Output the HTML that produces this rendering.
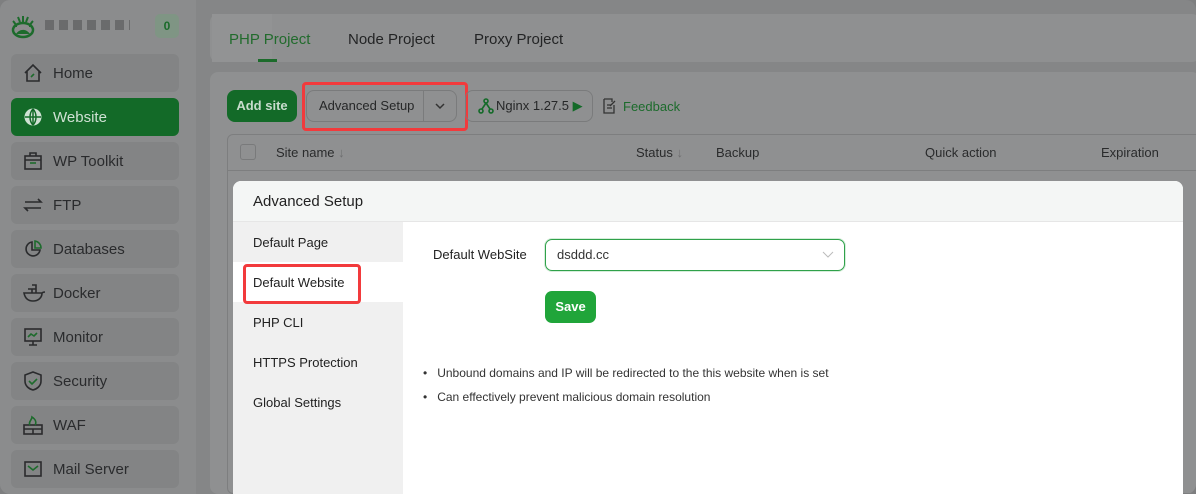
<!DOCTYPE html>
<html><head><style>
*{box-sizing:border-box;margin:0;padding:0}
html,body{width:1196px;height:494px;overflow:hidden}
body{background:#7e7f80;font-family:"Liberation Sans",sans-serif;position:relative}
.win{position:absolute;left:0;top:0;width:1196px;height:494px;border-radius:10px;background:#858687;overflow:hidden}
.side{position:absolute;left:0;top:0;width:196px;height:494px;background:#8b8c8d}
.nav{position:absolute;left:11px;width:168px;height:38px;border-radius:6px;background:#838485;color:#2a2b2d;font-size:15px;line-height:40px;padding-left:42px}
.nav svg{position:absolute;left:12px;top:9px}
.nav.act{background:#136a28;color:#cfe1d3}
.card{position:absolute;background:#8f9091;border-radius:8px}
.tab{position:absolute;top:31px;font-size:15px;color:#232425}
.btn{position:absolute;top:90px;height:32px;border:1px solid #7a7b7c;border-radius:8px;font-size:13px;line-height:30px;color:#262728}
.th{position:absolute;top:145px;font-size:13px;color:#2a2b2c}
.modal{position:absolute;left:233px;top:181px;width:950px;height:313px;background:#fff;border-radius:8px 8px 0 0;overflow:hidden}
.mh{height:41px;background:#f4f6f5;border-bottom:1px solid #e6e6e6;font-size:15px;color:#222;line-height:42px;padding-left:20px}
.ml{position:absolute;left:0;top:41px;width:170px;height:272px;background:#f0f0f0}
.mi{height:40px;line-height:42px;font-size:13px;color:#222;padding-left:20px}
.red{position:absolute;border:3px solid #f23a3c;border-radius:4px}
</style></head><body>
<div class="win">
<div class="side">
 <svg style="position:absolute;left:10px;top:13px" width="26" height="26" viewBox="0 0 26 26"><path d="M3 8c2 2 3 4 3 6M23 8c-2 2-3 4-3 6M8 4l2 5M18 4l-2 5M13 3v6" stroke="#1d6b2c" stroke-width="2" fill="none"/><ellipse cx="13" cy="17" rx="10" ry="7" fill="none" stroke="#1d6b2c" stroke-width="2.5"/><path d="M6 21c3-5 10-6 14 0z" fill="#1d6b2c"/></svg>
 <div style="position:absolute;left:45px;top:20px;width:85px;height:10px;background:repeating-linear-gradient(90deg,#6a6b6c 0 9px,#8c8d8e 9px 14px)"></div>
 <div style="position:absolute;left:155px;top:14px;width:24px;height:24px;border-radius:5px;background:#7f9584;color:#1a6b2a;font-size:12px;font-weight:bold;text-align:center;line-height:24px">0</div>
 <div class="nav" style="top:54px"><svg width="20" height="20" viewBox="0 0 20 20" fill="none" stroke="#2a2b2d" stroke-width="1.6"><path d="M2 10L10 2l8 8M4 8v10h12V8"/><path d="M8 14l3-3" stroke="#1d6b2c"/></svg>Home</div>
 <div class="nav act" style="top:98px"><svg width="20" height="20" viewBox="0 0 20 20"><circle cx="10" cy="10" r="8.5" fill="#cfe1d3"/><path d="M10 2v16M2 10h16M10 2c-4 4-4 12 0 16M10 2c4 4 4 12 0 16" stroke="#136a28" stroke-width="1.5" fill="none"/></svg>Website</div>
 <div class="nav" style="top:142px"><svg width="20" height="20" viewBox="0 0 20 20" fill="none" stroke="#2a2b2d" stroke-width="1.6"><rect x="2" y="5" width="16" height="13"/><path d="M7 5V2h6v3M2 9h16"/><path d="M7 12h6" stroke="#1d6b2c"/></svg>WP Toolkit</div>
 <div class="nav" style="top:186px"><svg width="20" height="20" viewBox="0 0 20 20" fill="none" stroke="#2a2b2d" stroke-width="1.6"><path d="M2 7h16l-3-3M18 13H2l3 3"/></svg>FTP</div>
 <div class="nav" style="top:230px"><svg width="20" height="20" viewBox="0 0 20 20" fill="none" stroke="#2a2b2d" stroke-width="1.6"><path d="M9 3a7 7 0 1 0 8 8H9z"/><path d="M12 2v7h6a7 7 0 0 0-6-7z" stroke="#1d6b2c"/></svg>Databases</div>
 <div class="nav" style="top:274px"><svg width="22" height="20" viewBox="0 0 22 20" fill="none" stroke="#2a2b2d" stroke-width="1.6"><path d="M1 10h18c0 5-4 8-9 8s-8-3-9-8zM5 6h4v4M9 6h4v4M9 2h4v4M19 10c1-1 2-1 3-1"/></svg>Docker</div>
 <div class="nav" style="top:318px"><svg width="20" height="20" viewBox="0 0 20 20" fill="none" stroke="#2a2b2d" stroke-width="1.6"><rect x="2" y="2" width="16" height="12"/><path d="M10 14v4M6 18h8"/><path d="M5 10l3-3 3 2 3-3" stroke="#1d6b2c"/></svg>Monitor</div>
 <div class="nav" style="top:362px"><svg width="20" height="20" viewBox="0 0 20 20" fill="none" stroke="#2a2b2d" stroke-width="1.6"><path d="M10 1l8 3v6c0 5-4 8-8 9-4-1-8-4-8-9V4z"/><path d="M6 10l3 3 5-5" stroke="#1d6b2c"/></svg>Security</div>
 <div class="nav" style="top:406px"><svg width="20" height="20" viewBox="0 0 20 20" fill="none" stroke="#2a2b2d" stroke-width="1.6"><rect x="1" y="10" width="18" height="9"/><path d="M1 14h18M10 14v5"/><path d="M7 10c-2-3 2-5 2-8 3 2 5 5 3 8" stroke="#1d6b2c"/></svg>WAF</div>
 <div class="nav" style="top:450px"><svg width="20" height="20" viewBox="0 0 20 20" fill="none" stroke="#2a2b2d" stroke-width="1.6"><rect x="2" y="3" width="16" height="14"/><path d="M5 7l5 4 5-4" stroke="#1d6b2c"/></svg>Mail Server</div>
</div>
<div class="card" style="left:210px;top:14px;width:990px;height:48px"></div>
<div style="position:absolute;left:212px;top:14px;width:60px;height:48px;background:#929394"></div>
<div class="tab" style="left:229px;color:#226b2d">PHP Project</div>
<div style="position:absolute;left:258px;top:59px;width:19px;height:3px;background:#1c6b2b"></div>
<div class="tab" style="left:348px">Node Project</div>
<div class="tab" style="left:474px">Proxy Project</div>
<div class="card" style="left:210px;top:72px;width:990px;height:422px"></div>
<div class="btn" style="left:227px;width:70px;background:#136a28;border-color:#136a28;color:#c8dccd;font-weight:bold;text-align:center">Add site</div>
<div class="btn" style="left:306px;width:151px;padding-left:12px">Advanced Setup<span style="position:absolute;left:116px;top:0;height:30px;border-left:1px solid #7a7b7c"></span><svg style="position:absolute;left:128px;top:11px" width="10" height="8"><path d="M1 2l4 4 4-4" stroke="#333" stroke-width="1.5" fill="none"/></svg></div>
<div class="red" style="left:302px;top:82px;width:166px;height:49px"></div>
<div class="btn" style="left:465px;width:128px;padding-left:30px">Nginx 1.27.5 <span style="color:#136a28">▶</span><svg style="position:absolute;left:12px;top:7px" width="16" height="16" viewBox="0 0 16 16" fill="none" stroke="#136a28" stroke-width="1.6"><circle cx="8" cy="3" r="2"/><circle cx="3" cy="13" r="2"/><circle cx="13" cy="13" r="2"/><path d="M8 5L4 11M8 5l4 6"/></svg></div>
<svg style="position:absolute;left:602px;top:98px" width="14" height="16" viewBox="0 0 14 16" fill="none" stroke="#333" stroke-width="1.3"><path d="M2 1h8v3M2 1v14h10V7M5 7h4M5 10h5M8 8l5-5"/></svg>
<div style="position:absolute;left:623px;top:99px;font-size:13px;color:#1c6b2c">Feedback</div>
<div style="position:absolute;left:227px;top:134px;width:980px;height:360px;border:1px solid #7d7e7f;border-radius:6px"></div>
<div style="position:absolute;left:227px;top:170px;width:969px;border-top:1px solid #7d7e7f"></div>
<div style="position:absolute;left:240px;top:144px;width:16px;height:16px;border:1px solid #797a7b;border-radius:3px"></div>
<div class="th" style="left:276px">Site name <span style="color:#6e6f70">↓</span></div>
<div class="th" style="left:636px">Status <span style="color:#6e6f70">↓</span></div>
<div class="th" style="left:716px">Backup</div>
<div class="th" style="left:925px">Quick action</div>
<div class="th" style="left:1101px">Expiration</div>
<div class="modal">
 <div class="mh">Advanced Setup</div>
 <div class="ml">
  <div class="mi">Default Page</div>
  <div class="mi" style="background:#fff">Default Website</div>
  <div class="mi">PHP CLI</div>
  <div class="mi">HTTPS Protection</div>
  <div class="mi">Global Settings</div>
 </div>
 <div style="position:absolute;left:200px;top:66px;font-size:13px;color:#222">Default WebSite</div>
 <div style="position:absolute;left:312px;top:58px;width:300px;height:32px;border:1px solid #2fa14a;border-radius:7px;box-shadow:0 0 0 1px #d6eedb;font-size:13px;color:#333;line-height:30px;padding-left:11px">dsddd.cc<svg style="position:absolute;right:10px;top:11px" width="12" height="8"><path d="M1 1l5 5 5-5" stroke="#bbb" fill="none"/></svg></div>
 <div style="position:absolute;left:312px;top:110px;width:51px;height:32px;border-radius:7px;background:#20a53a;color:#fff;font-size:13px;font-weight:bold;text-align:center;line-height:32px">Save</div>
 <div style="position:absolute;left:190px;top:180px;font-size:12px;color:#333;line-height:24px">
  <div>•&nbsp;&nbsp; Unbound domains and IP will be redirected to the this website when is set</div>
  <div>•&nbsp;&nbsp; Can effectively prevent malicious domain resolution</div>
 </div>
</div>
<div class="red" style="left:243px;top:264px;width:118px;height:40px"></div>
</div>
</body></html>
